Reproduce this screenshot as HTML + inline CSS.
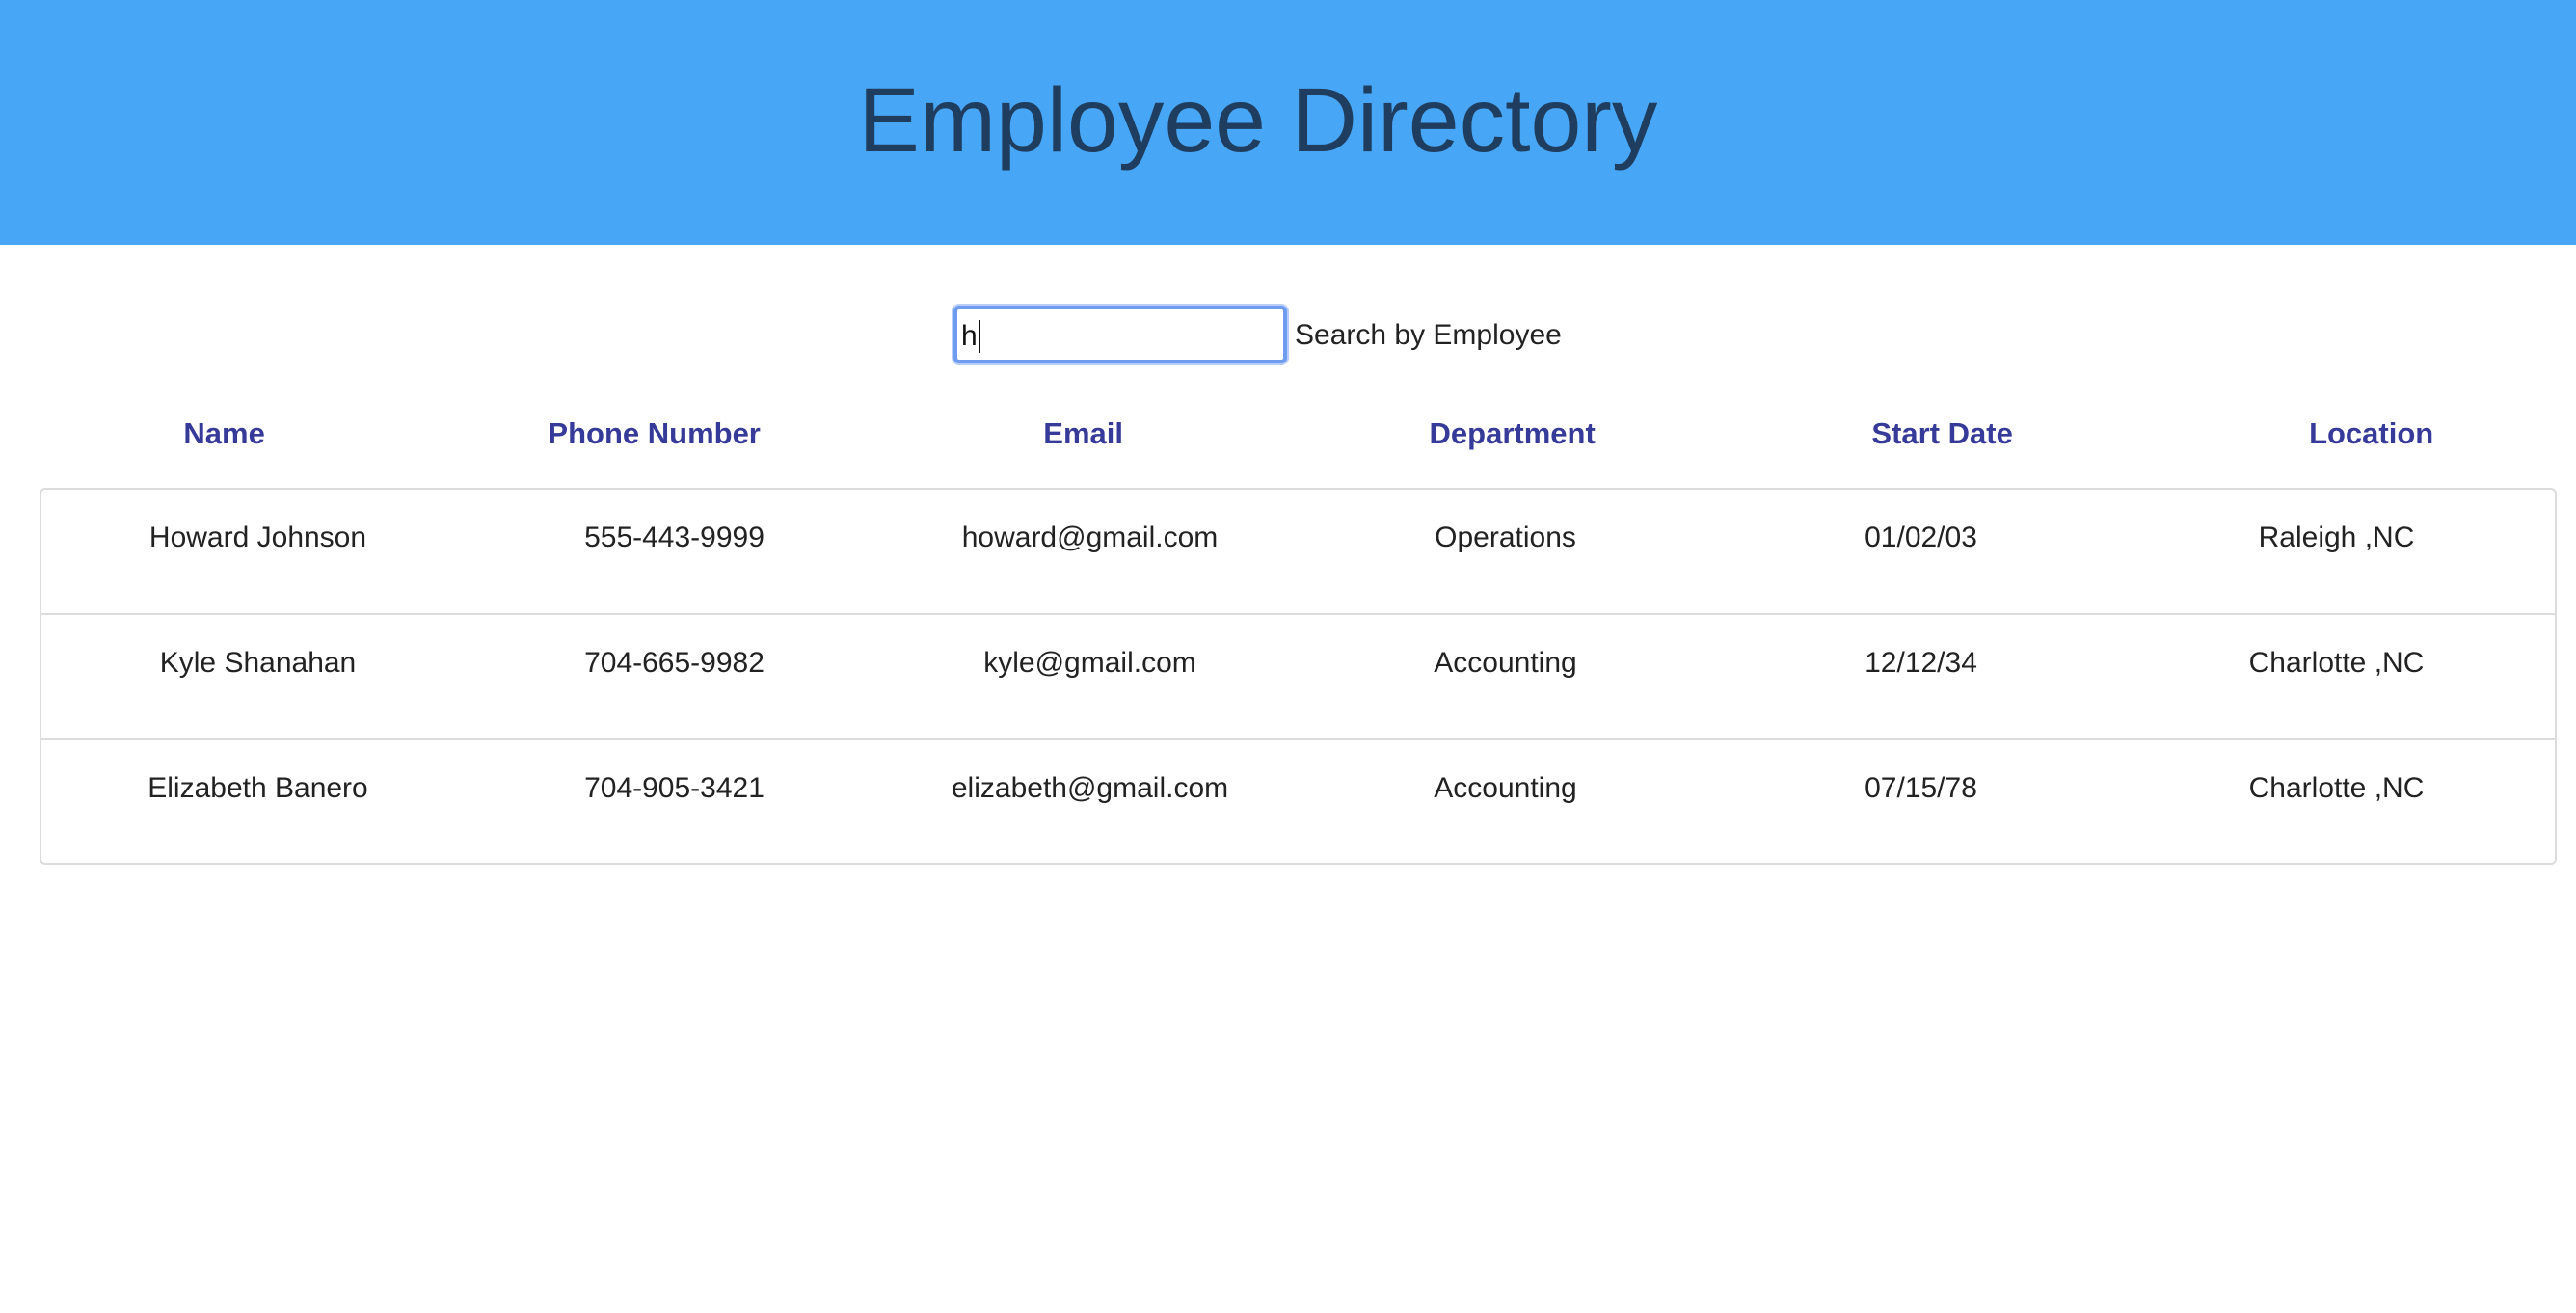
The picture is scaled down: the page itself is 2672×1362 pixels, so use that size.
<!DOCTYPE html>
<html><head><meta charset="utf-8"><style>
*{margin:0;padding:0;box-sizing:border-box}
html,body{width:2672px;height:1362px;background:#fff;overflow:hidden;font-family:"Liberation Sans",Arial,sans-serif}
.hdr{position:absolute;left:0;top:0;width:2672px;height:254px;background:#47a6f6}
.hdr h1{position:absolute;left:0;width:2610px;top:65px;text-align:center;font-weight:400;font-size:95px;line-height:120px;color:#1f3d5e;letter-spacing:0px}
.inp{position:absolute;left:989px;top:317px;width:346px;height:60px;border:4px solid #6f9cf0;border-radius:6px;box-shadow:0 0 0 2px #b9cdf7;background:#fff}
.inp span{position:absolute;left:4px;top:12px;font-size:30px;color:#111;line-height:32px}
.inp i{position:absolute;left:22px;top:11px;width:2px;height:34px;background:#111}
.lbl{position:absolute;left:1343px;top:330px;font-size:30px;line-height:36px;color:#222}
.th{position:absolute;top:432px;width:445.3px;text-align:center;font-size:31px;font-weight:700;color:#363a98;line-height:36px}
.box{position:absolute;left:41px;top:506px;width:2611px;height:391px;border:2px solid #dcdcdc;border-radius:6px}
.line{position:absolute;left:41px;width:2611px;height:2px;background:#dcdcdc}
.td{position:absolute;width:431px;text-align:center;font-size:30px;color:#222;line-height:36px}
</style></head><body>
<div class="hdr"><h1>Employee Directory</h1></div>
<div class="inp"><span>h</span><i></i></div>
<div class="lbl">Search by Employee</div>

<div class="th" style="left:10px">Name</div>
<div class="th" style="left:456px">Phone Number</div>
<div class="th" style="left:901px">Email</div>
<div class="th" style="left:1346px">Department</div>
<div class="th" style="left:1792px">Start Date</div>
<div class="th" style="left:2237px">Location</div>

<div class="box"></div>
<div class="line" style="top:636px"></div>
<div class="line" style="top:766px"></div>

<div class="td" style="left:52px;top:540px">Howard Johnson</div>
<div class="td" style="left:484px;top:540px">555-443-9999</div>
<div class="td" style="left:915px;top:540px">howard@gmail.com</div>
<div class="td" style="left:1346px;top:540px">Operations</div>
<div class="td" style="left:1777px;top:540px">01/02/03</div>
<div class="td" style="left:2208px;top:540px">Raleigh ,NC</div>

<div class="td" style="left:52px;top:670px">Kyle Shanahan</div>
<div class="td" style="left:484px;top:670px">704-665-9982</div>
<div class="td" style="left:915px;top:670px">kyle@gmail.com</div>
<div class="td" style="left:1346px;top:670px">Accounting</div>
<div class="td" style="left:1777px;top:670px">12/12/34</div>
<div class="td" style="left:2208px;top:670px">Charlotte ,NC</div>

<div class="td" style="left:52px;top:800px">Elizabeth Banero</div>
<div class="td" style="left:484px;top:800px">704-905-3421</div>
<div class="td" style="left:915px;top:800px">elizabeth@gmail.com</div>
<div class="td" style="left:1346px;top:800px">Accounting</div>
<div class="td" style="left:1777px;top:800px">07/15/78</div>
<div class="td" style="left:2208px;top:800px">Charlotte ,NC</div>
</body></html>
